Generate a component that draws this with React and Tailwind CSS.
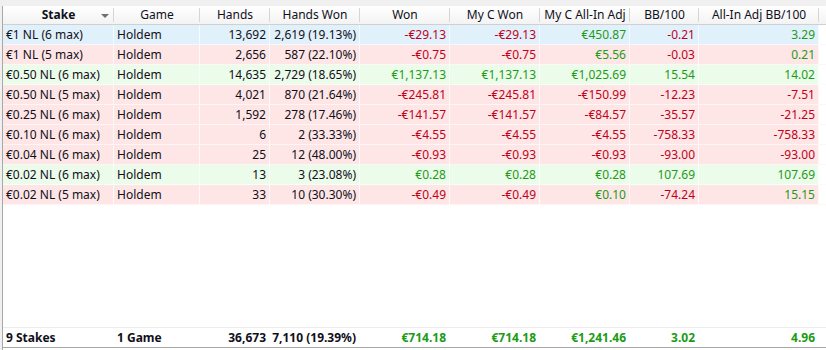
import React from "react";

const cols = "grid grid-cols-[111px_86px_70px_90px_90px_90px_90px_69px_120px_1fr]";

const rows = [
  ["€1 NL (6 max)", "13,692", "2,619 (19.13%)", "-€29.13", "-€29.13", "€450.87", "-0.21", "3.29", "blue"],
  ["€1 NL (5 max)", "2,656", "587 (22.10%)", "-€0.75", "-€0.75", "€5.56", "-0.03", "0.21", "red"],
  ["€0.50 NL (6 max)", "14,635", "2,729 (18.65%)", "€1,137.13", "€1,137.13", "€1,025.69", "15.54", "14.02", "green"],
  ["€0.50 NL (5 max)", "4,021", "870 (21.64%)", "-€245.81", "-€245.81", "-€150.99", "-12.23", "-7.51", "red"],
  ["€0.25 NL (6 max)", "1,592", "278 (17.46%)", "-€141.57", "-€141.57", "-€84.57", "-35.57", "-21.25", "red"],
  ["€0.10 NL (6 max)", "6", "2 (33.33%)", "-€4.55", "-€4.55", "-€4.55", "-758.33", "-758.33", "red"],
  ["€0.04 NL (6 max)", "25", "12 (48.00%)", "-€0.93", "-€0.93", "-€0.93", "-93.00", "-93.00", "red"],
  ["€0.02 NL (6 max)", "13", "3 (23.08%)", "€0.28", "€0.28", "€0.28", "107.69", "107.69", "green"],
  ["€0.02 NL (5 max)", "33", "10 (30.30%)", "-€0.49", "-€0.49", "€0.10", "-74.24", "15.15", "red"],
];

const bgFor = { blue: "bg-[#e1f1fb]", red: "bg-[#fee6e6]", green: "bg-[#ebfcea]" };

function money(v) {
  return v.startsWith("-") ? "text-[#c0001a]" : "text-[#1c9b16]";
}

function Header({ children, bold, arrow }) {
  return (
    <div className="relative flex items-center justify-center h-[18px]">
      <span className={bold ? "font-bold" : ""}>{children}</span>
      {arrow && (
        <span className="absolute right-[5px] top-[8px] w-0 h-0 border-l-[4px] border-r-[4px] border-t-[4px] border-l-transparent border-r-transparent border-t-[#707070]" />
      )}
      <span className="absolute right-0 top-[2px] h-[14px] w-px bg-[#d6d6d6]" />
    </div>
  );
}

function Cell({ children, right, className = "" }) {
  return (
    <div className={`h-[19px] flex items-center px-[3px] border-r border-white/70 whitespace-nowrap ${right ? "justify-end" : ""} ${className}`}>
      {children}
    </div>
  );
}

export default function App() {
  return (
    <div className="w-[826px] h-[350px] bg-white text-[12px] text-[#10101a] flex flex-col overflow-hidden" style={{ fontFamily: '"Noto Sans", "Open Sans", sans-serif' }}>
      <div className="h-[6px] bg-[#f0f0f0] shrink-0" />
      <div className="flex flex-1 min-h-0">
        <div className="w-[3px] bg-[#f0f0f0] border-r border-[#a8a8a8] shrink-0" />
        <div className="flex-1 flex flex-col min-w-0">
          {/* header */}
          <div className={`${cols} bg-gradient-to-b from-white to-[#f3f3f3] border-b border-[#d0d0d0] leading-none`}>
            <Header bold arrow>Stake</Header>
            <Header>Game</Header>
            <Header>Hands</Header>
            <Header>Hands Won</Header>
            <Header>Won</Header>
            <Header>My C Won</Header>
            <Header>My C All-In Adj</Header>
            <Header>BB/100</Header>
            <Header>All-In Adj BB/100</Header>
            <div />
          </div>

          {/* rows */}
          <div className="flex-1">
            {rows.map((r) => (
              <div key={r[0]} className={`${cols} ${bgFor[r[8]]} border-b border-white/60`}>
                <Cell>{r[0]}</Cell>
                <Cell>Holdem</Cell>
                <Cell right>{r[1]}</Cell>
                <Cell right>{r[2]}</Cell>
                <Cell right className={money(r[3])}>{r[3]}</Cell>
                <Cell right className={money(r[4])}>{r[4]}</Cell>
                <Cell right className={money(r[5])}>{r[5]}</Cell>
                <Cell right className={money(r[6])}>{r[6]}</Cell>
                <Cell right className={money(r[7])}>{r[7]}</Cell>
                <div className="bg-white" />
              </div>
            ))}
          </div>

          {/* footer */}
          <div className={`${cols} font-bold border-t border-[#ececec] border-b border-b-[#a8a8a8]`}>
            <Cell className="border-[#ececec]">9 Stakes</Cell>
            <Cell className="border-[#ececec]">1 Game</Cell>
            <Cell right className="border-[#ececec]">36,673</Cell>
            <Cell right className="border-[#ececec]">7,110 (19.39%)</Cell>
            <Cell right className="border-[#ececec] text-[#1c9b16]">€714.18</Cell>
            <Cell right className="border-[#ececec] text-[#1c9b16]">€714.18</Cell>
            <Cell right className="border-[#ececec] text-[#1c9b16]">€1,241.46</Cell>
            <Cell right className="border-[#ececec] text-[#1c9b16]">3.02</Cell>
            <Cell right className="border-[#ececec] text-[#1c9b16]">4.96</Cell>
            <div />
          </div>
          <div className="h-[2px] shrink-0" />
        </div>
      </div>
    </div>
  );
}
